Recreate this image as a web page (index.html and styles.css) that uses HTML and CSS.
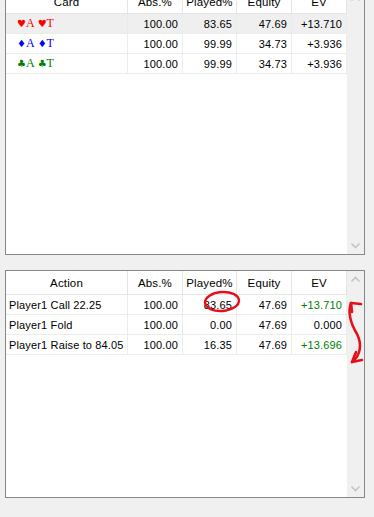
FILE: index.html
```html
<!DOCTYPE html>
<html lang="en">
<head>
    <meta charset="UTF-8">
    <meta name="viewport" content="width=device-width, initial-scale=1.0">
    <title>Hand Strategy</title>
    <link rel="stylesheet" href="styles.css">
</head>
<body>

<div class="panel panel-top">
    <div class="grid">
        <div class="head">Card</div>
        <div class="head">Abs.%</div>
        <div class="head">Played%</div>
        <div class="head">Equity</div>
        <div class="head">EV</div>

        <div class="cell card sel hearts"><span><span class="suit">&#9829;</span>A&nbsp;<span class="suit">&#9829;</span>T</span></div>
        <div class="cell num sel">100.00</div>
        <div class="cell num sel">83.65</div>
        <div class="cell num sel">47.69</div>
        <div class="cell num sel">+13.710</div>

        <div class="cell card diamonds"><span><span class="suit">&#9830;</span>A&nbsp;<span class="suit">&#9830;</span>T</span></div>
        <div class="cell num">100.00</div>
        <div class="cell num">99.99</div>
        <div class="cell num">34.73</div>
        <div class="cell num">+3.936</div>

        <div class="cell card clubs"><span><span class="suit">&#9827;</span>A&nbsp;<span class="suit">&#9827;</span>T</span></div>
        <div class="cell num">100.00</div>
        <div class="cell num">99.99</div>
        <div class="cell num">34.73</div>
        <div class="cell num">+3.936</div>
    </div>
    <div class="scrollbar">
        <svg width="17" height="17" viewBox="0 0 17 17"><polyline points="4.5,10.5 8.5,6.5 12.5,10.5" fill="none" stroke="#c4c4c4" stroke-width="1.6"/></svg>
        <svg width="17" height="17" viewBox="0 0 17 17"><polyline points="4.5,6.5 8.5,10.5 12.5,6.5" fill="none" stroke="#c4c4c4" stroke-width="1.6"/></svg>
    </div>
</div>

<div class="panel panel-bottom">
    <div class="grid">
        <div class="head">Action</div>
        <div class="head">Abs.%</div>
        <div class="head">Played%</div>
        <div class="head">Equity</div>
        <div class="head">EV</div>

        <div class="cell">Player1 Call 22.25</div>
        <div class="cell num">100.00</div>
        <div class="cell num">83.65</div>
        <div class="cell num">47.69</div>
        <div class="cell num plus">+13.710</div>

        <div class="cell">Player1 Fold</div>
        <div class="cell num">100.00</div>
        <div class="cell num">0.00</div>
        <div class="cell num">47.69</div>
        <div class="cell num">0.000</div>

        <div class="cell">Player1 Raise to 84.05</div>
        <div class="cell num">100.00</div>
        <div class="cell num">16.35</div>
        <div class="cell num">47.69</div>
        <div class="cell num plus">+13.696</div>
    </div>
    <div class="scrollbar">
        <svg width="17" height="17" viewBox="0 0 17 17"><polyline points="4.5,10.5 8.5,6.5 12.5,10.5" fill="none" stroke="#c4c4c4" stroke-width="1.6"/></svg>
        <svg width="17" height="17" viewBox="0 0 17 17"><polyline points="4.5,6.5 8.5,10.5 12.5,6.5" fill="none" stroke="#c4c4c4" stroke-width="1.6"/></svg>
    </div>
</div>

<!-- hand-drawn markup on top of the screenshot -->
<svg class="marks" width="374" height="517" viewBox="0 0 374 517">
    <ellipse cx="222" cy="301.5" rx="17" ry="9.5" transform="rotate(-4 222 301.5)" fill="none" stroke="#e5101a" stroke-width="2.4"/>
    <path d="M351,303 C347,314 351,324 357,334 C362,344 361,355 352,362" fill="none" stroke="#e5101a" stroke-width="2.6" stroke-linecap="round"/>
    <path d="M361,304 L351,303 L352,312" fill="none" stroke="#e5101a" stroke-width="2.6" stroke-linecap="round" stroke-linejoin="round"/>
    <path d="M356,352 L352,362 L362,360" fill="none" stroke="#e5101a" stroke-width="2.6" stroke-linecap="round" stroke-linejoin="round"/>
</svg>

</body>
</html>
```

FILE: styles.css
```css
body {
    margin: 0;
    background: #f0f0f0;
    font-family: 'Liberation Sans', Arial, sans-serif;
    font-size: 11px;
    letter-spacing: 0.15px;
    color: #000;
    position: relative;
    overflow: hidden;
    height: 517px;
}
.panel {
    box-sizing: border-box;
    width: 360px;
    margin-left: 5px;
    border: 1px solid #828790;
    background: #fff;
    display: flex;
}
.panel-top {
    margin-top: -11px;
    height: 266px;
}
.panel-bottom {
    margin-top: 15px;
    height: 228px;
}
.grid {
    width: 341px;
    display: grid;
    grid-template-columns: 122px 55px 54px 55px 55px;
    grid-auto-rows: 20px;
    grid-template-rows: 24px;
    align-content: start;
}
.head,
.cell {
    box-sizing: border-box;
    border-right: 1px solid #e5e5e5;
    border-bottom: 1px solid #e5e5e5;
    display: flex;
    align-items: center;
    white-space: nowrap;
    overflow: hidden;
}
.head {
    justify-content: center;
    font-size: 11.5px;
}
.cell {
    padding: 0 4px 0 3px;
    border-color: #ececec;
}
.num {
    justify-content: flex-end;
}
.sel {
    background: #efefef;
}
.plus {
    color: #008000;
}
.card {
    padding-left: 11px;
    font-family: 'Liberation Serif', 'Times New Roman', serif;
    font-size: 12px;
    letter-spacing: 0;
}
.card .suit {
    font-family: 'DejaVu Sans', sans-serif;
    font-size: 10px;
}
.hearts {
    color: #ff0000;
}
.diamonds {
    color: #0000ff;
}
.clubs {
    color: #008000;
}
.scrollbar {
    width: 17px;
    background: #f0f0f0;
    display: flex;
    flex-direction: column;
    justify-content: space-between;
}
.scrollbar svg {
    display: block;
}
.marks {
    position: absolute;
    top: 0;
    left: 0;
    pointer-events: none;
}
```
